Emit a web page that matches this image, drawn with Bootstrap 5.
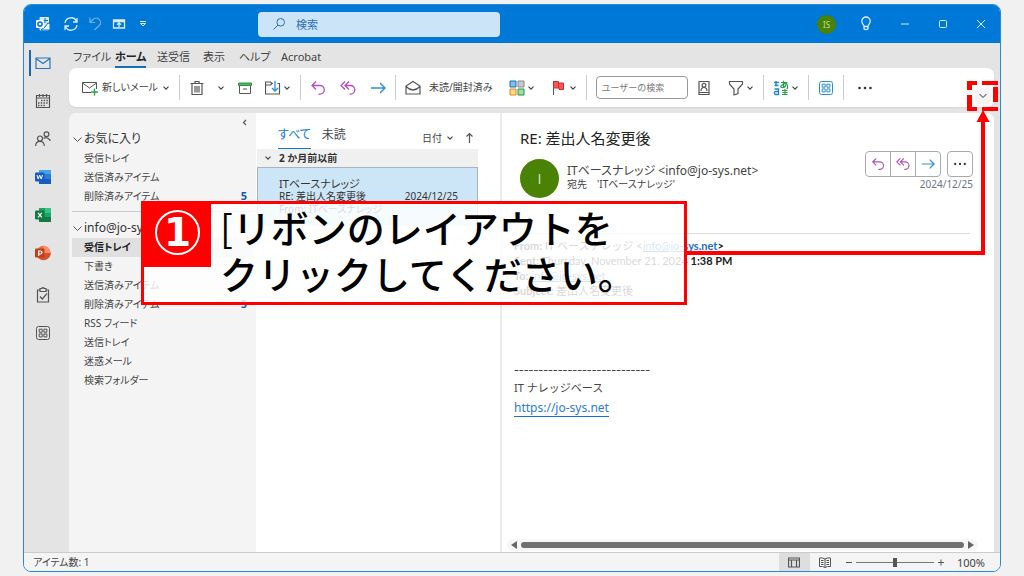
<!DOCTYPE html>
<html lang="ja">
<head>
<meta charset="utf-8">
<meta name="viewport" content="width=device-width, initial-scale=1">
<title>受信トレイ - Outlook</title>
<link href="https://cdn.jsdelivr.net/npm/bootstrap@5.3.0/dist/css/bootstrap.min.css" rel="stylesheet">
<style>
  body { background: #f1f1f1; color: #444; font: 10px/15px "Noto Sans", "Noto Sans CJK JP", sans-serif; font-feature-settings: "palt"; }
  button { background: none; border: 0; padding: 0; color: inherit; font: inherit; display: inline-flex; align-items: center; }
  svg { fill: none; stroke: #555; stroke-width: 1; flex: none; display: block; }
  .ico { width: 16px; height: 16px; }
  .chev { width: 8px; height: 8px; stroke: #444; }
  .t11 { font-size: 11px; } .t12 { font-size: 12px; }
  .stage { height: 100vh; min-height: 420px; padding: 4px 23px; }
  .window { background: #e4e4e4; border: 1px solid #2b88d8; border-radius: 8px; overflow: hidden; }
  .titlebar { background: #0078d7; height: 38px; flex: none; padding: 0 10px 0 11px; }
  .titlebar svg { stroke: #d9ecfb; }
  .quick { width: 223px; gap: 8px; }
  .searchbox { background: #cce4f7; border-radius: 4px; width: 242px; height: 25px; padding-left: 14px; gap: 10px; color: #2a6fb0; }
  .searchbox svg { stroke: #2a6fb0; }
  .searchbox input { background: none; border: 0; outline: 0; width: 190px; padding: 0; color: inherit; font-size: 11px; }
  .searchbox input::placeholder { color: #2a6fb0; }
  .user { width: 19px; height: 19px; border-radius: 50%; background: #498205; color: #c5dba8; font-size: 8px; justify-content: center; }
  .rail { width: 45px; flex: none; padding-top: 1px; }
  .rail button { height: 38px; width: 38px; justify-content: center; }
  .rail .on { position: relative; }
  .rail .on::before { content: ""; position: absolute; left: 5px; top: 6px; width: 2px; height: 26px; background: #0f6cbd; }
  .tabs-row { height: 25px; flex: none; padding-left: 4px; font-size: 11px; }
  .tabs-row a { color: #444; text-decoration: none; line-height: 19px; height: 22px; white-space: nowrap; flex: none; width: 42px; }
  .tabs-row a.wide { width: 46px; } .tabs-row a.slim { width: 36px; }
  .tabs-row a.on span { display: inline-block; font-weight: 700; color: #222; border-bottom: 2px solid #0f6cbd; height: 20px; line-height: 18px; }
  .ribbon { background: #fff; border-radius: 7px; height: 39px; flex: none; margin-right: 6px; padding-left: 13px; box-shadow: 0 1px 2px #d4d4d4; white-space: nowrap; }
  .ribbon .vr { margin: 7px 9px; background: #ccc; opacity: 1; }
  .ribbon .drop { gap: 2px; }
  .newmail { width: 88px; }
  .people { width: 92px; height: 23px; border: 1px solid #999; border-radius: 4px; padding: 0 5px; font-size: 9px; color: #777; outline: 0; }
  .people::placeholder { color: #777; }
  .collapse-ribbon { align-self: flex-end; background: #f4f4f4; width: 16px; height: 16px; border-radius: 3px; justify-content: center; margin: 0 3px 3px auto; }
  .panes { margin: 6px 6px 0 0; min-height: 0; }
  .folders { width: 187px; flex: none; background: #f4f4f4; border-radius: 7px 0 0 0; padding: 1px 3px 0; }
  .folders h2 { font-size: 12px; line-height: 20px; margin: 0; padding-left: 1px; gap: 2px; color: #333; font-weight: 400; }
  .folders ul { list-style: none; margin: 0; padding: 0; }
  .folders li a { display: flex; justify-content: space-between; height: 19px; line-height: 18px; padding: 0 6px 0 12px; color: #444; text-decoration: none; white-space: nowrap; }
  .folders li a.on { background: #e0e0e0; font-weight: 700; color: #222; }
  .folders li b { color: #0f5bb5; font-size: 11px; }
  .rule { border: 0; border-top: 1px solid #ccc; opacity: 1; margin: 5px 0 6px; }
  .maillist { width: 246px; flex: none; background: #fff; border-right: 2px solid #ececec; padding: 13px 22px 0 1px; }
  .filters { height: 23px; padding: 0 4px 0 21px; gap: 11px; }
  .filters button { height: 23px; align-items: flex-start; line-height: 18px; white-space: nowrap; }
  .filters .on { color: #0f78d0; border-bottom: 1px solid #0f78d0; }
  .group-head { background: #f0f0f0; height: 18px; padding-left: 7px; gap: 7px; font-weight: 700; color: #333; }
  .mail { background: #cde6f7; border: 1px solid #a5b4c0; border-width: 1px 1px 0; height: 59px; padding: 9px 19px 0 21px; line-height: 13px; color: #333; }
  .reader { background: #fff; border-radius: 0 7px 0 0; padding: 15px 21px 0 12px; }
  .subject { font-size: 15px; line-height: 20px; margin: 0; padding-left: 6px; color: #222; font-weight: 400; font-feature-settings: normal; }
  .sender-row { padding: 11px 0 0 6px; }
  .face { width: 39px; height: 39px; border-radius: 50%; background: #498205; color: #d9e8c8; font: 14px "Open Sans", sans-serif; flex: none; }
  .acts { margin-top: -8px; }
  .acts button { width: 26px; height: 26px; justify-content: center; border: 1px solid #aaa; }
  .acts .btn-group button + button { margin-left: -1px; }
  .acts .btn-group button { flex: none; }
  .acts .btn-group button:first-child { border-radius: 4px 0 0 4px; }
  .acts .btn-group button:last-child { border-radius: 0 4px 4px 0; }
  .acts .lone { border-radius: 4px; margin-left: 6px; }
  .quoted { border-top: 1px solid #ddd; padding-top: 4px; margin: 35px 3px 0 0; font: 11px/15px Lato, "Noto Sans CJK JP", sans-serif; color: #222; }
  .reader a { color: #1a6fc9; }
  .signature { font: 11px/20px "Noto Sans", "Noto Sans CJK JP", sans-serif; margin-top: 60px; font-feature-settings: normal; }
  .dashes { font: 14px/20px "Noto Sans CJK JP", sans-serif; }
  .reader .url { font-size: 12px; text-decoration: none; border-bottom: 1px solid #1a6fc9; color: #2b7cd3; }
  .hscroll { background: #f6f6f6; height: 12px; border-radius: 6px; gap: 4px; margin: auto -5px 1px -7px; padding: 0 4px; }
  .hscroll div { height: 6px; border-radius: 3px; background: #6f6f6f; }
  .hscroll svg { width: 6px; height: 8px; fill: #666; stroke: none; }
  .status { background: #f4f4f4; height: 19px; flex: none; border-top: 1px solid #ccc; padding: 0 15px 0 9px; }
  .status .view { width: 31px; height: 18px; justify-content: center; }
  .status .on { background: #dedede; }
  .zoombar { appearance: none; width: 78px; height: 9px; margin: 0 3px; background: linear-gradient(#777, #777) center/100% 1px no-repeat; }
  .zoombar::-webkit-slider-thumb { appearance: none; width: 4px; height: 9px; background: #555; }
  /* tutorial annotations drawn over the window */
  .callout { position: absolute; left: 141px; top: 201px; width: 546px; height: 104px; border: 3px solid #f00; background: rgba(255,255,255,.82); z-index: 3; }
  .step { width: 67px; height: 63px; background: #f00; flex: none; padding: 6px 0 0 11px; }
  .step span { display: block; width: 45px; height: 45px; border: 2px solid #fff; border-radius: 50%; color: #fff; font: 700 39px/42px "DejaVu Sans", sans-serif; text-align: center; }
  .callout p { font: 500 38px/46px "Noto Sans CJK JP", sans-serif; color: #000; margin: 0 0 0 9px; white-space: nowrap; font-feature-settings: normal; }
  .callout p i { font-weight: 400; font-style: normal; }
  .connector { position: absolute; left: 687px; right: 39px; top: 118px; height: 137px; border: solid #f00; border-width: 0 4px 4px 0; z-index: 2; }
  .target { position: absolute; right: 25px; top: 80px; width: 32px; height: 42px; z-index: 4; fill: #f00; stroke: none; }
</style>
</head>
<body>
<svg width="0" height="0" class="position-absolute">
  <symbol id="down" viewBox="0 0 8 8"><path d="M1.500 2.700 4 5.200l2.500-2.500" stroke-width="1.200"/></symbol>
  <symbol id="reply" viewBox="0 0 16 16"><path d="M6 1.500 2 5.500l4 4M2 5.500h8a4.300 4.300 0 0 1 0 8.600H8.500" stroke="#b14fc0" stroke-width="1.300"/></symbol>
  <symbol id="replyall" viewBox="0 0 16 16"><path d="m5 1.500-4 4 4 4M9 1.500l-4 4 4 4M5 5.500h5.500a4.200 4.200 0 0 1 0 8.600h-1" stroke="#b14fc0" stroke-width="1.300"/></symbol>
  <symbol id="forward" viewBox="0 0 16 16"><path d="M1 8h14M10 3l5 5-5 5" stroke="#2891d9" stroke-width="1.400"/></symbol>
  <symbol id="dots" viewBox="0 0 16 16"><g fill="#333" stroke="none"><circle cx="2.500" cy="8" r="1.300"/><circle cx="8" cy="8" r="1.300"/><circle cx="13.500" cy="8" r="1.300"/></g></symbol>
  <symbol id="apps" viewBox="0 0 16 16"><rect x="1.500" y="1.500" width="13" height="13" rx="2"/><path d="M4.200 4.200h3v3h-3zM8.900 4.200h3v3h-3zM4.200 8.900h3v3h-3zM8.900 8.900h3v3h-3z"/></symbol>
</svg>
<div class="stage">
 <main class="window h-100 d-flex flex-column">
  <header class="titlebar d-flex align-items-center">
    <div class="quick d-flex align-items-center">
      <button aria-label="Outlook"><svg class="ico" viewBox="0 0 16 16"><path d="M5 4V1.500h8.500V14H5v-2" fill="#cfe5f8"/><path d="M10 2v5M7 4.500h6M13 7l2 1v6H6l4-3z" stroke="#0078d7" fill="#fff"/><rect x="1" y="4" width="8" height="8" rx="1" fill="#fff" stroke="none"/><circle cx="5" cy="8" r="2.100" stroke="#0078d7" stroke-width="1.500"/></svg></button>
      <button class="ms-1" aria-label="更新"><svg class="ico" viewBox="0 0 16 16"><path d="M2 7a6 6 0 0 1 11.500-1.500M14 2v4h-4M14 9a6 6 0 0 1-11.500 1.500M2 14v-4h4" stroke-width="1.300"/></svg></button>
      <button aria-label="元に戻す"><svg class="ico" viewBox="0 0 16 16" opacity=".5"><path d="M3 1.500v5h5M3 6.500l3-3a4.300 4.300 0 0 1 6.300 6L7.500 14" stroke-width="1.200"/></svg></button>
      <button aria-label="表示"><svg class="ico" viewBox="0 0 16 16"><path d="M2.500 4h11v8h-11zM2.500 5.500h11M8 11V7M6 8.800l2-2 2 2" stroke-width="1.300"/></svg></button>
      <button aria-label="カスタマイズ"><svg class="ico" viewBox="0 0 16 16"><path d="M5 5.500h6M5.500 7.500h5L8 10z"/></svg></button>
    </div>
    <label class="searchbox d-flex align-items-center"><svg width="14" height="14" viewBox="0 0 14 14"><circle cx="8.700" cy="5.300" r="3.800"/><path d="M6 8l-4.500 4.500"/></svg><input type="text" placeholder="検索" aria-label="検索"></label>
    <div class="ms-auto d-flex align-items-center gap-4">
      <button class="user">IS</button>
      <button class="me-1" aria-label="ヒント"><svg width="12" height="16" viewBox="0 0 12 16"><path d="M4 10.500C4 8.700 1.800 8 1.800 5.200a4.200 4.200 0 0 1 8.400 0c0 2.800-2.200 3.500-2.200 5.300zM4 10.500v2.200q2 1.800 4 0v-2.200" stroke-width="1.300"/></svg></button>
      <button class="me-1" aria-label="最小化"><svg width="10" height="10" viewBox="0 0 10 10"><path d="M1 5h8"/></svg></button>
      <button class="me-1" aria-label="最大化"><svg width="10" height="10" viewBox="0 0 10 10"><rect x="1.500" y="1.500" width="7" height="7" rx="1"/></svg></button>
      <button aria-label="閉じる"><svg class="me-1" width="10" height="10" viewBox="0 0 10 10"><path d="m1 1 8 8M9 1 1 9"/></svg></button>
    </div>
  </header>

  <div class="d-flex flex-grow-1" style="min-height:0">
    <nav class="rail d-flex flex-column">
      <button class="on" aria-label="メール"><svg class="ico" viewBox="0 0 16 16"><path d="M1 3h14v10.500H1zM1 3.500l7 5 7-5" stroke="#2a76b8" stroke-width="1.200"/></svg></button>
      <button aria-label="予定表"><svg class="ico" viewBox="0 0 16 16"><path d="M1.500 2.500h13v12h-13zM1.500 5h13M4.500 1v3M8 1v3M11.500 1v3" stroke-width="1.200"/><path d="M6 7.500h7M3 10h10M3 12.500h7" stroke-width="1.500" stroke-dasharray="1.500 1.200"/></svg></button>
      <button aria-label="連絡先"><svg class="ico" viewBox="0 0 16 16"><g stroke-width="1.200"><circle cx="11.500" cy="3.300" r="2.400"/><circle cx="5" cy="7.500" r="2.500"/><path d="M8.500 7.500q3-2.500 6.500 1.500V10M.7 15q0-4.600 4.300-4.600T9.300 15"/></g></svg></button>
      <button aria-label="Word"><svg class="ico" viewBox="0 0 16 16"><g stroke="none"><path d="M4 1h12v5H4z" fill="#41a5ee"/><path d="M4 5h12v5H4z" fill="#2b7cd3"/><path d="M4 10h12v5H4z" fill="#185abd"/><rect y="3.500" width="9.500" height="9" rx="1" fill="#185abd"/></g><path d="m2 6 1.200 4 1.500-4 1.500 4L7.500 6" stroke="#fff"/></svg></button>
      <button aria-label="Excel"><svg class="ico" viewBox="0 0 16 16"><g stroke="none"><path d="M4 1h12v14H4z" fill="#21a366"/><path d="M10 1h6v5h-6z" fill="#33c481"/><path d="M4 10h12v5H4z" fill="#107c41"/><rect y="3.500" width="9.500" height="9" rx="1" fill="#107c41"/></g><path d="m3 5.800 3.800 4.500M6.800 5.800 3 10.300" stroke="#fff" stroke-width="1.200"/></svg></button>
      <button aria-label="PowerPoint"><svg class="ico" viewBox="0 0 16 16"><g stroke="none"><circle cx="8.500" cy="8" r="7.200" fill="#ed6c47"/><path d="M8.500 8V.8A7.200 7.200 0 0 1 15.700 8z" fill="#ff8f6b"/><path d="M1.300 8h14.400a7.200 7.200 0 0 1-14.400 0" fill="#d35230"/><rect y="3.500" width="9.500" height="9" rx="1" fill="#c43e1c"/></g><path d="M3.700 11V6h1.500q1.800 0 1.800 1.500T5.200 9H3.700" stroke="#fff" stroke-width="1.200"/></svg></button>
      <button class="mt-1" aria-label="タスク"><svg class="ico" viewBox="0 0 16 16"><path d="M5 3H2.500v12h11V3H11M5 1.500h1.500q1.500-1.500 3 0H11v3H5zM5 9.500l2.300 2.500L12 6.500" stroke-width="1.200"/></svg></button>
      <button aria-label="その他のアプリ"><svg class="ico" stroke-width="1.200"><use href="#apps"/></svg></button>
    </nav>

    <div class="d-flex flex-column flex-grow-1" style="min-width:0">
      <nav class="tabs-row d-flex align-items-start pt-1">
        <a href="#">ファイル</a><a href="#" class="on"><span>ホーム</span></a><a href="#" class="wide">送受信</a><a href="#" class="slim">表示</a><a href="#">ヘルプ</a><a href="#">Acrobat</a>
      </nav>
      <div class="ribbon d-flex align-items-center" role="toolbar">
        <button class="newmail justify-content-between"><svg class="ico" viewBox="0 0 16 16"><path d="M9 12.500H.5V2.500h14V9M.5 3l7 5 7-5"/><path d="M12.500 8.500v7M9 12h7" stroke="#2ea44f" stroke-width="1.500"/></svg><span>新しいメール</span><svg class="chev"><use href="#down"/></svg></button>
        <span class="vr"></span>
        <div class="d-flex align-items-center" style="gap:12px">
          <button aria-label="削除"><svg class="ico" viewBox="0 0 16 16"><path d="M1.500 3.500h13M6 3V1.500h4V3M3 4v10.500h10V4M6 6v6.500M8 6v6.500M10 6v6.500" stroke-width="1.200"/></svg></button>
          <button aria-label="削除メニュー"><svg class="chev"><use href="#down"/></svg></button>
          <button aria-label="アーカイブ"><svg class="ico" viewBox="0 0 16 16"><path d="M2.500 6v7.500h11V6M6 9h4"/><path d="M1.500 3h13v2.500h-13z" fill="#4fb36a" stroke="#2b9348"/></svg></button>
          <button class="drop" aria-label="移動"><svg class="ico" viewBox="0 0 16 16"><path d="M8 3.500H7L5.500 2h-5v12h14V3.500h-2M.5 5h5l1.500-1.500" stroke-width="1.200"/><path d="M10 1v9.500M7 8l3 3 3-3" stroke="#2891d9" stroke-width="1.300"/></svg><svg class="chev"><use href="#down"/></svg></button>
        </div>
        <span class="vr"></span>
        <div class="d-flex" style="gap:14px">
          <button aria-label="返信"><svg class="ico"><use href="#reply"/></svg></button>
          <button aria-label="全員に返信"><svg class="ico"><use href="#replyall"/></svg></button>
          <button aria-label="転送"><svg class="ico"><use href="#forward"/></svg></button>
        </div>
        <span class="vr"></span>
        <div class="d-flex" style="gap:16px">
          <button style="gap:8px"><svg class="ico" viewBox="0 0 16 16"><path d="M1 6v8h14V6L8 1.500zM1 6.500q7 7 14 0" stroke-width="1.200"/></svg>未読/開封済み</button>
          <button class="drop" aria-label="分類"><svg class="ico" viewBox="0 0 16 16"><path d="M1 1h6v6H1z" fill="#83beec" stroke="#1e70b8"/><path d="M9 1h6v6H9z" fill="#c8c8c8" stroke="#888"/><path d="M1 9h6v6H1z" fill="#ffd98a" stroke="#e08a1e"/><path d="M9 9h6v6H9z" fill="#a5dba8" stroke="#2b9348"/></svg><svg class="chev"><use href="#down"/></svg></button>
          <button class="drop" aria-label="フラグ"><svg class="ico" viewBox="0 0 16 16"><path d="M2.500 15V1"/><path d="M2.500 1.500h5V3h5v6.500H8V8H2.500z" fill="#f0595b" stroke="#d6282c"/><path d="M7.500 3v5" stroke="#d6282c"/></svg><svg class="chev"><use href="#down"/></svg></button>
        </div>
        <span class="vr"></span>
        <input class="people" type="text" placeholder="ユーザーの検索" aria-label="ユーザーの検索">
        <button class="ms-2 me-3" aria-label="アドレス帳"><svg class="ico" viewBox="0 0 16 16"><g stroke-width="1.200"><path d="M3 1.500h10v13H3zM3 12.500h10"/><circle cx="8" cy="5.200" r="1.900"/><path d="M5 11q0-3.500 3-3.500t3 3.500"/></g></svg></button>
        <button class="drop" aria-label="フィルター"><svg class="ico" viewBox="0 0 16 16"><path d="M1.500 1.500h13V4L10 9v4.500L6 15V9L1.500 4z" stroke-width="1.200"/></svg><svg class="chev"><use href="#down"/></svg></button>
        <span class="vr"></span>
        <button class="drop" aria-label="翻訳"><svg class="ico" viewBox="0 0 16 16"><path d="M1 2.500h5M3 1v4.500M1.500 5.500h4M1.500 9h4v5.500H2.200q-1.700-2 0-3h3" stroke="#1e88c9" stroke-width="1.400"/><path d="M8 2.500h6.500M10.500.8v7M13 4.500q-1 3.500-4 3t1-3 4.500 1-1 3M9 10.500h5.500M12 9v6M9 14.500h5.500M9.500 12.500h5" stroke="#2b9d4a" stroke-width="1.200"/></svg><svg class="chev"><use href="#down"/></svg></button>
        <span class="vr"></span>
        <button aria-label="アドイン"><svg class="ico" style="stroke:#2e8fcb"><use href="#apps"/></svg></button>
        <span class="vr"></span>
        <button class="ms-1" aria-label="その他"><svg class="ico"><use href="#dots"/></svg></button>
        <button class="collapse-ribbon" aria-label="リボンのレイアウト"><svg width="10" height="10" viewBox="0 0 10 10"><path d="m1.500 3 3.500 3.500L8.500 3" stroke="#333"/></svg></button>
      </div>

      <div class="panes d-flex flex-grow-1">
        <aside class="folders">
          <div class="d-flex justify-content-end pe-1"><button aria-label="折りたたむ"><svg width="8" height="15" viewBox="0 0 8 15"><path d="M5 6 2.500 8.500 5 11" stroke-width="1.200"/></svg></button></div>
          <h2 class="d-flex align-items-center"><svg width="9" height="9" viewBox="0 0 9 9"><path d="m.5 2.500 4 4 4-4"/></svg>お気に入り</h2>
          <ul>
            <li><a href="#">受信トレイ</a></li>
            <li><a href="#">送信済みアイテム</a></li>
            <li><a href="#">削除済みアイテム<b>5</b></a></li>
          </ul>
          <hr class="rule">
          <h2 class="d-flex align-items-center"><svg width="9" height="9" viewBox="0 0 9 9"><path d="m.5 2.500 4 4 4-4"/></svg>info@jo-sys.net</h2>
          <ul>
            <li><a href="#" class="on">受信トレイ</a></li>
            <li><a href="#">下書き</a></li>
            <li><a href="#">送信済みアイテム</a></li>
            <li><a href="#">削除済みアイテム<b>5</b></a></li>
            <li><a href="#">RSS フィード</a></li>
            <li><a href="#">送信トレイ</a></li>
            <li><a href="#">迷惑メール</a></li>
            <li><a href="#">検索フォルダー</a></li>
          </ul>
        </aside>
        <section class="maillist">
          <div class="filters d-flex">
            <button class="on t12">すべて</button><button class="t12">未読</button>
            <button class="ms-auto gap-1 align-items-center">日付<svg class="chev"><use href="#down"/></svg></button>
            <button class="align-items-center" aria-label="昇順"><svg width="9" height="12" viewBox="0 0 9 12"><path d="M4.500 11V1.500M1.500 4.500l3-3 3 3" stroke-width="1.200"/></svg></button>
          </div>
          <div class="group-head d-flex align-items-center"><svg class="chev"><use href="#down"/></svg>2 か月前以前</div>
          <article class="mail overflow-hidden">
            <div class="t11">ITベースナレッジ</div>
            <div class="d-flex justify-content-between"><span>RE: 差出人名変更後</span><span>2024/12/25</span></div>
            <div>From: ITベースナレッジ</div>
          </article>
        </section>
        <section class="reader flex-grow-1 d-flex flex-column">
          <h1 class="subject">RE: 差出人名変更後</h1>
          <div class="sender-row d-flex">
            <div class="face d-flex align-items-center justify-content-center">I</div>
            <div class="ps-2 pt-1 lh-sm flex-grow-1"><div class="t12">ITベースナレッジ &lt;info@jo-sys.net&gt;</div><div>宛先　'ITベースナレッジ'</div></div>
            <div class="acts text-end">
              <div class="d-flex justify-content-end"><div class="btn-group"><button aria-label="返信"><svg width="14" height="14"><use href="#reply"/></svg></button><button aria-label="全員に返信"><svg width="14" height="14"><use href="#replyall"/></svg></button><button aria-label="転送"><svg width="14" height="14"><use href="#forward"/></svg></button></div><button class="lone" aria-label="その他"><svg width="14" height="14"><use href="#dots"/></svg></button></div>
              <div class="text-secondary">2024/12/25</div>
            </div>
          </div>
          <div class="quoted">
            <div><b>From:</b> IT ベースナレッジ &lt;<a href="#">info@jo-s<b>ys.net</b></a><b>&gt;</b></div>
            <div><b>Sent:</b> Thursday, November 21, 2024 <b>1:38 PM</b></div>
            <div><b>To:</b> <a href="#">info@jo-sys.net</a></div>
            <div><b>Subject:</b> 差出人名変更後</div>
          </div>
          <div class="signature">
            <div class="dashes">----------------------------</div>
            <div>IT ナレッジベース</div>
            <a class="url" href="#">https://jo-sys.net</a>
          </div>
          <div class="hscroll d-flex align-items-center"><svg viewBox="0 0 6 8"><path d="M6 0v8L0 4z"/></svg><div class="flex-grow-1"></div><svg viewBox="0 0 6 8"><path d="M0 0v8l6-4z"/></svg></div>
        </section>
      </div>
    </div>
  </div>

  <footer class="status d-flex align-items-center">
    <span>アイテム数: 1</span>
    <button class="view on ms-auto" aria-label="標準"><svg width="12" height="11" viewBox="0 0 12 11"><path d="M.5 1h11v9H.5zM.5 3h11M3.500 3v7M8.500 3v7" stroke-width="1.200"/></svg></button>
    <button class="view" aria-label="閲覧"><svg width="12" height="11" viewBox="0 0 12 11"><path d="M6 2Q3 .3.500 1v8.500q3-.5 5.500 1 2.500-1.500 5.500-1V1Q9 .3 6 2v8.500M2 3.500h2.500M2 5.500h2.500M2 7.500h2.500M7.500 3.500H10M7.500 5.500H10M7.500 7.500H10"/></svg></button>
    <button class="ms-1" aria-label="縮小"><svg width="8" height="8" viewBox="0 0 8 8"><path d="M1 4.500h6"/></svg></button>
    <input class="zoombar" type="range" value="50" aria-label="ズーム">
    <button class="me-1" aria-label="拡大"><svg width="8" height="8" viewBox="0 0 8 8"><path d="M1 4.500h6M4 1.500v6"/></svg></button>
    <span class="ps-2 t11">100%</span>
  </footer>
 </main>
</div>

<div class="connector"></div>
<svg class="target" viewBox="0 0 32 42"><path d="M0 1h10v4H5v5H0zM15 1h16v4H15zM0 15h5v12h5v4H0zM26 7h5v15h-5zM15 27h16v4H15zM16 30l6.500 12h-13z"/></svg>
<div class="callout d-flex">
  <div class="step"><span>1</span></div>
  <p><i>[</i>リボンのレイアウトを<br>クリックしてください。</p>
</div>
<script src="https://cdn.jsdelivr.net/npm/bootstrap@5.3.0/dist/js/bootstrap.bundle.min.js"></script>
</body>
</html>
